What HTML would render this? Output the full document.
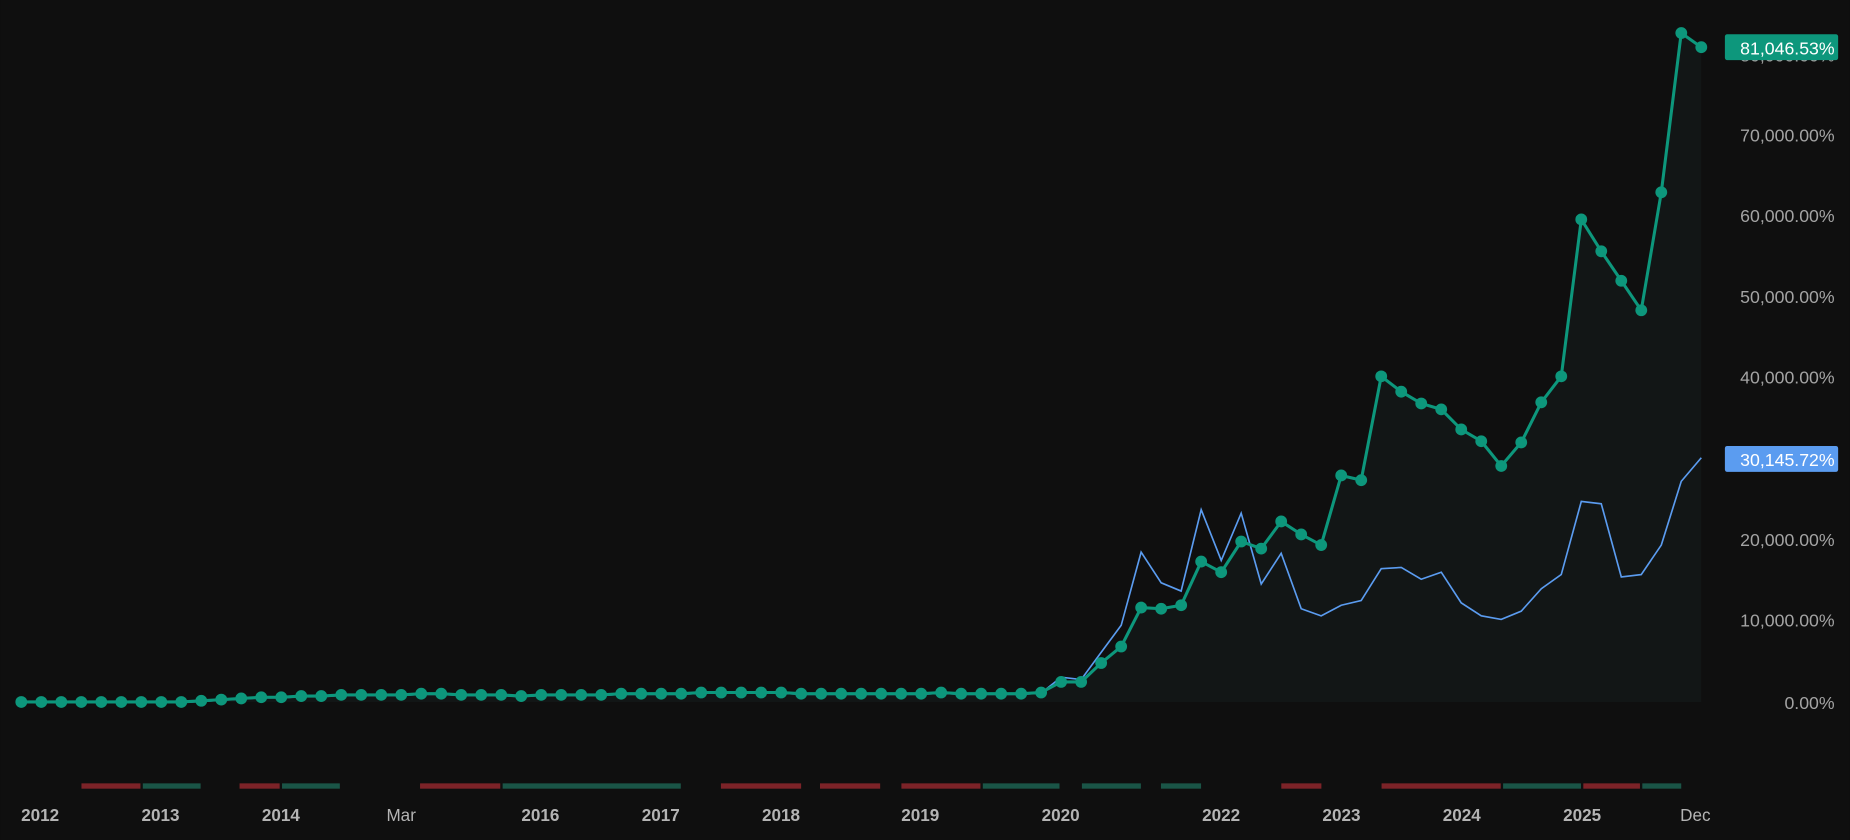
<!DOCTYPE html>
<html><head><meta charset="utf-8"><style>
html,body{margin:0;padding:0;background:#0f0f0f;overflow:hidden}
svg{display:block}
.yl{font-family:"Liberation Sans",sans-serif;font-size:15px;fill:#a3a3a3;text-anchor:end}
.xl{font-family:"Liberation Sans",sans-serif;font-size:14.5px;font-weight:bold;fill:#b4b4b4;text-anchor:middle}
</style></head><body>
<svg id="s" width="1850" height="840" viewBox="0 0 1568 712" xmlns="http://www.w3.org/2000/svg">
<rect width="1568" height="712" fill="#0f0f0f"/>
<path id="area" fill="#121616"/>
<g id="bars"></g>
<polyline id="blue" fill="none" stroke="#5b9cf0" stroke-width="1.4"/>
<polyline id="green" fill="none" stroke="#0d977c" stroke-width="2.6"/>
<g id="dots" fill="#0d977c"></g>
<g class="yl">
<text x="1555" y="601">0.00%</text>
<text x="1555" y="531">10,000.00%</text>
<text x="1555" y="463">20,000.00%</text>
<text x="1555" y="325">40,000.00%</text>
<text x="1555" y="257">50,000.00%</text>
<text x="1555" y="188">60,000.00%</text>
<text x="1555" y="120">70,000.00%</text>
<text x="1555" y="52">80,000.00%</text>
</g>
<rect x="1462" y="29" width="96" height="22" rx="2" fill="#0d977c"/>
<text x="1555" y="46" style="font-family:'Liberation Sans',sans-serif;font-size:15px;fill:#fff;text-anchor:end">81,046.53%</text>
<rect x="1462" y="378" width="96" height="22" rx="2" fill="#5b9cf0"/>
<text x="1555" y="395" style="font-family:'Liberation Sans',sans-serif;font-size:15px;fill:#fff;text-anchor:end">30,145.72%</text>
<g class="xl">
<text x="34" y="696">2012</text><text x="136" y="696">2013</text><text x="238" y="696">2014</text>
<text x="340" y="696" style="font-weight:normal">Mar</text><text x="458" y="696">2016</text><text x="560" y="696">2017</text>
<text x="662" y="696">2018</text><text x="780" y="696">2019</text><text x="899" y="696">2020</text>
<text x="1035" y="696">2022</text><text x="1137" y="696">2023</text><text x="1239" y="696">2024</text>
<text x="1341" y="696">2025</text><text x="1437" y="696" style="font-weight:normal">Dec</text>
</g>
</svg>
<script>
var NS="http://www.w3.org/2000/svg";
var early=[595,595,595,595,595,595,595,595,595,594,593,592,591,591,590,590,589,589,589,589,588,588,589,589,589,590,589,589,589,589,588,588,588,588,587,587,587,587,587,588,588,588,588,588,588,588,587,588,588,588,588,587];
var late=[578,578,562,548,515,516,513,476,485,459,465,442,453,462,403,407,319,332,342,347,364,374,395,375,341,319,186,213,238,263,163,28,40];
var bl=[574,576,553,530,468,494,501,432,475,435,495,469,516,522,513,509,482,481,491,485,511,522,525,518,499,487,425,427,489,487,462,408,388];
var g=[],b=[];
for(var i=0;i<early.length;i++){var x=18+i*16.95;g.push([x,early[i]]);b.push([x,early[i]+0.5]);}
var x0=g[g.length-1][0];
for(var i=0;i<late.length;i++){var x=x0+(i+1)*(1442-x0)/late.length;g.push([x,late[i]]);b.push([x,bl[i]]);}
function pts(a){return a.map(function(p){return p[0].toFixed(1)+","+p[1]}).join(" ");}
document.getElementById("green").setAttribute("points",pts(g));
document.getElementById("blue").setAttribute("points",pts(b));
document.getElementById("area").setAttribute("d","M"+g[0][0]+",595 L"+pts(g)+" L1442,595 Z");
var d=document.getElementById("dots");
g.forEach(function(p){var c=document.createElementNS(NS,"circle");c.setAttribute("cx",p[0]);c.setAttribute("cy",p[1]);c.setAttribute("r",5);d.appendChild(c);});
var bars=[["r",69,119],["g",121,170],["r",203,237],["g",239,288],["r",356,424],["g",426,577],["r",611,679],["r",695,746],["r",764,831],["g",833,898],["g",917,967],["g",984,1018],["r",1086,1120],["r",1171,1272],["g",1274,1340],["r",1342,1390],["g",1392,1425]];
var bg=document.getElementById("bars");
bars.forEach(function(r){var e=document.createElementNS(NS,"rect");e.setAttribute("x",r[1]);e.setAttribute("y",664);e.setAttribute("width",r[2]-r[1]);e.setAttribute("height",4.5);e.setAttribute("fill",r[0]=="r"?"#7c2328":"#1a5547");bg.appendChild(e);});
</script>
</body></html>
